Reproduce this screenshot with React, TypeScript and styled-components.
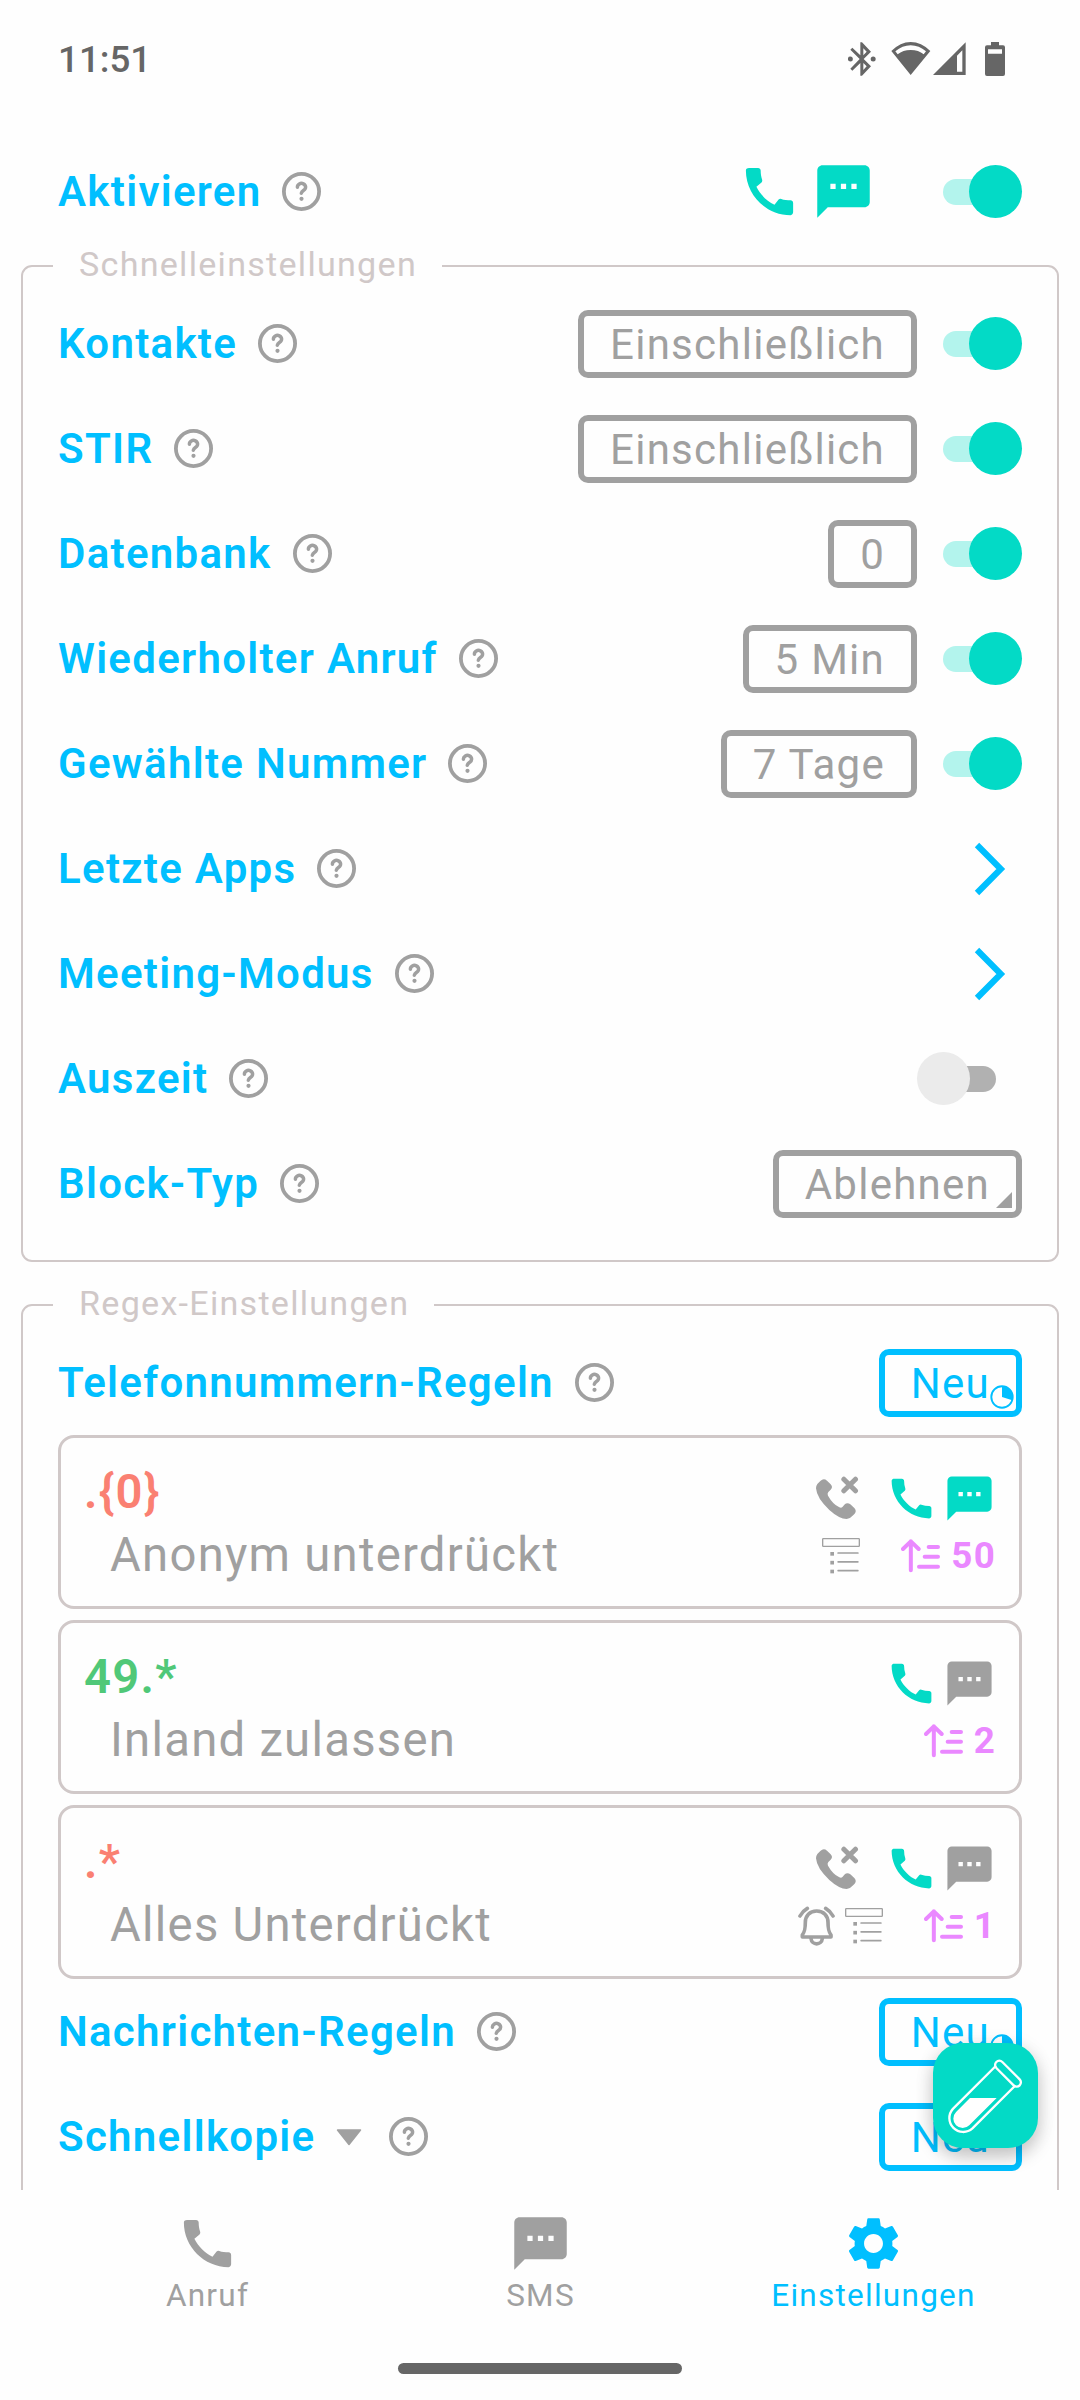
import React from "react";
import styled, { createGlobalStyle } from "styled-components";
import { MdCall, MdSettings, MdTextsms } from "react-icons/md";

const color = {
  blue: "#00bfff",
  teal: "#03dac6",
  gray: "#a0a0a0",
  line: "#d0c8c8",
  salmon: "#fa8072",
  green: "#50c878",
  violet: "#ea88ff",
  status: "#666666",
};

const GlobalStyle = createGlobalStyle`
  * { box-sizing: border-box; }
  body { margin: 0; background: #fefefe; }
`;

const Screen = styled.div`
  position: relative;
  display: flex;
  flex-direction: column;
  width: 1080px;
  height: 2400px;
  overflow: hidden;
  background: #fefefe;
  font-family: Roboto, "Noto Sans", sans-serif;
  letter-spacing: 1.26px;
  color: ${color.gray};
  svg { display: block; flex: none; }
`;

/* ---------- status bar ---------- */

const StatusBar = styled.header`
  display: flex;
  align-items: center;
  justify-content: space-between;
  height: 139px;
  padding: 0 75px 21px 58px;
  color: ${color.status};
`;

const Clock = styled.span`
  font-size: 36.75px;
  font-weight: 500;
  letter-spacing: 0;
`;

const StatusIcons = styled.div`
  display: flex;
  align-items: center;
`;

const StatusGlyph = styled.svg<{ $gap?: number }>`
  margin-left: ${(p) => p.$gap ?? 0}px;
  fill: currentColor;
`;

/* ---------- settings ---------- */

const Main = styled.main`
  flex: none;
  height: 2051px;
  overflow: hidden;
`;

const Row = styled.div<{ $outer?: boolean }>`
  display: flex;
  align-items: center;
  height: 105px;
  padding: 0 ${(p) => (p.$outer ? 58 : 35)}px;
`;

const Label = styled.span`
  margin-right: 21px;
  font-size: 42px;
  font-weight: 600;
  line-height: 50px;
  letter-spacing: 1.29px;
  white-space: nowrap;
  color: ${color.blue};
`;

const Actions = styled.div`
  display: flex;
  align-items: center;
  margin-left: auto;
`;

const ChannelIcons = styled.div<{ $gap: number; $after?: number }>`
  display: flex;
  gap: ${(p) => p.$gap}px;
  margin-right: ${(p) => p.$after ?? 0}px;
`;

const Group = styled.fieldset<{ $top: number }>`
  min-width: 0;
  margin: ${(p) => p.$top}px 21px 0;
  padding: 4px 0 24px;
  border: 2px solid ${color.line};
  border-radius: 11px;
`;

const Legend = styled.legend`
  height: 42px;
  margin-left: 30px;
  padding: 0 25px 0 26px;
  font-size: 34.125px;
  line-height: 38px;
  color: ${color.line};
`;

const OutlineButton = styled.button<{ $accent?: boolean }>`
  position: relative;
  height: 68px;
  margin-top: 1px;
  padding: 1px 26px 0;
  border: 6px solid currentColor;
  border-radius: 10px;
  background: transparent;
  font: 400 42px/54px Roboto, "Noto Sans", sans-serif;
  letter-spacing: inherit;
  white-space: nowrap;
  color: ${(p) => (p.$accent ? color.blue : color.gray)};
`;

const Corner = styled.span<{ $inset: number }>`
  position: absolute;
  right: ${(p) => p.$inset}px;
  bottom: ${(p) => p.$inset}px;
`;

const Track = styled.span<{ $on: boolean }>`
  display: flex;
  align-items: center;
  justify-content: ${(p) => (p.$on ? "flex-end" : "flex-start")};
  width: 53px;
  height: 26px;
  margin: 0 26px;
  border-radius: 13px;
  background: ${(p) => (p.$on ? "#b3f4ed" : "#b1b1b1")};
`;

const Thumb = styled.span<{ $on: boolean }>`
  flex: none;
  width: 53px;
  height: 53px;
  margin: 0 -26px;
  border-radius: 50%;
  background: ${(p) => (p.$on ? color.teal : "#ebebeb")};
`;

const ChevronBox = styled.span`
  margin-right: 15px;
`;

const DropArrow = styled.span`
  margin: 1px 27px 0 0;
`;

/* ---------- rule cards ---------- */

const Rules = styled.div`
  display: flex;
  flex-direction: column;
  gap: 11px;
  padding: 0 35px;
`;

const Card = styled.article`
  display: flex;
  justify-content: space-between;
  height: 174px;
  padding: 22px 23px 0;
  border: 3px solid ${color.line};
  border-radius: 16px;
`;

const RuleText = styled.div`
  padding-top: 1px;
  font-size: 47.25px;
  line-height: 63px;
`;

const Pattern = styled.div<{ $tone: string }>`
  font-weight: 600;
  color: ${(p) => p.$tone};
`;

const Description = styled.div`
  padding-left: 26px;
`;

const Meta = styled.div`
  display: flex;
  flex-direction: column;
  align-items: flex-end;
`;

const MetaTop = styled.div`
  display: flex;
  align-items: center;
  height: 54px;
  margin-top: 11px;
`;

const MetaBottom = styled.div`
  display: flex;
  align-items: center;
  height: 62px;
`;

const BlockedSlot = styled.span`
  margin-right: 26px;
`;

const Priority = styled.div`
  display: flex;
  align-items: center;
  gap: 11px;
  margin-left: 41px;
  font-size: 36.75px;
  font-weight: 700;
  line-height: 44px;
  color: ${color.violet};
`;

const Flags = styled.div`
  display: flex;
  align-items: center;
  gap: 10px;
`;

/* ---------- floating button and navigation ---------- */

const Fab = styled.button`
  position: absolute;
  top: 2043px;
  left: 933px;
  width: 105px;
  height: 105px;
  padding: 0;
  border: 0;
  border-radius: 30px;
  background: ${color.teal};
  box-shadow: 0 9px 18px rgba(0, 0, 0, 0.2), 0 2px 20px rgba(0, 0, 0, 0.08);
`;

const Nav = styled.nav`
  display: grid;
  grid-template-columns: repeat(3, 1fr);
  height: 173px;
  padding: 22px 40px 0 41px;
`;

const NavItem = styled.a<{ $active?: boolean }>`
  display: flex;
  flex-direction: column;
  align-items: center;
  font-size: 31.5px;
  line-height: 42px;
  color: ${(p) => (p.$active ? color.blue : color.gray)};
`;

const HomeBar = styled.div`
  width: 284px;
  height: 11px;
  margin: 0 auto;
  border-radius: 6px;
  background: ${color.status};
`;

/* ---------- drawings ---------- */

const Help = () => (
  <svg width="39" height="39" viewBox="0 0 39 39" fill="none" stroke={color.gray} strokeLinecap="round" strokeLinejoin="round">
    <circle cx="19.5" cy="19.5" r="17.6" strokeWidth="3.8" />
    <path d="M15.4 15.2 A4.1 3.7 0 1 1 21.7 18.2 Q19.6 19.6 19.3 21.3" strokeWidth="3.5" />
    <circle cx="19.5" cy="26.8" r="2.1" fill={color.gray} stroke="none" />
  </svg>
);

const Chevron = () => (
  <ChevronBox>
    <svg width="34" height="54" viewBox="0 0 34 54" fill="none" stroke={color.blue} strokeWidth="6.2">
      <path d="M4 3 L27.8 27 L4 51" />
    </svg>
  </ChevronBox>
);

const CallBlocked = () => (
  <svg width="44" height="44" viewBox="105 471 132 132" fill={color.gray}>
    <path d="M121 486 Q131 476 141 485 L152 496 Q160 505 152 512 L145 519 Q141 524 144 530 Q158 555 178 565 Q184 568 188 563 L193 557 Q202 549 211 556 L223 567 Q231 576 224 584 L216 592 Q210 600 200 600 Q178 600 148 573 Q110 537 108 508 Q108 500 112 495 Z" />
    <path d="M191.5 480.5 L226.5 515.5 M226.5 480.5 L191.5 515.5" stroke={color.gray} strokeWidth="15" strokeLinecap="round" />
  </svg>
);

const BlockList = () => (
  <svg width="38" height="36" viewBox="126 658 114 108" fill={color.gray}>
    <rect x="128" y="660" width="110" height="23" rx="2" fill="none" stroke={color.gray} strokeWidth="4" />
    {[703, 729.5, 756].map((y) => (
      <g key={y}>
        <rect x="151" y={y - 3} width="11" height="11" />
        <rect x="172" y={y - 2.5} width="64" height="5" rx="2" />
      </g>
    ))}
  </svg>
);

const Bell = () => (
  <svg width="37" height="40" viewBox="55 889 111 120" fill="none" stroke={color.gray} strokeWidth="11" strokeLinecap="round" strokeLinejoin="round">
    <path d="M111 904 C90 904 77 918 77 938 C77 960 75 966 68 976 V982 H154 V976 C147 966 145 960 145 938 C145 918 132 904 111 904 Z" />
    <path d="M94 986 C96 1008 126 1008 128 986" />
    <path d="M61 919 Q69 904 83 896 M160 919 Q152 904 138 896" />
  </svg>
);

const SortUp = () => (
  <svg width="39" height="34" viewBox="363 656 117 102" fill="none" stroke={color.violet} strokeWidth="12" strokeLinecap="round" strokeLinejoin="round">
    <path d="M392.5 663 V750 M369 686 L392.5 663 L416 686" />
    <path d="M446 680 H474 M434 709.5 H474 M417 739 H474" />
  </svg>
);

const Pie = () => (
  <svg width="24" height="24" viewBox="0 0 24 24">
    <circle cx="12" cy="12" r="10.7" fill="none" stroke="currentColor" strokeWidth="1.9" />
    <path d="M12 12 V1.3 A10.7 10.7 0 0 1 22.3 15.2 Z" fill="currentColor" />
  </svg>
);

const TestTube = () => (
  <svg width="105" height="105" viewBox="459 219 315 315" fill="none" stroke="#fff" strokeWidth="7">
    <path d="M648 287.4 L518.7 416.7 A41.5 41.5 0 0 0 577.3 475.3 L706 346.6" />
    <path d="M667 276 L719 328 A12.7 12.7 0 0 1 701 346 L649 294 A12.7 12.7 0 0 1 667 276 Z" />
    <path d="M570 384 H650 L567.8 465.8 A28 28 0 0 1 528.2 426.2 Z" fill="#fff" stroke="none" />
  </svg>
);

/* ---------- composed parts ---------- */

const Switch = ({ on }: { on: boolean }) => (
  <Track $on={on}>
    <Thumb $on={on} />
  </Track>
);

type SettingProps = {
  label: string;
  outer?: boolean;
  extra?: React.ReactNode;
  children: React.ReactNode;
};

const Setting = ({ label, outer, extra, children }: SettingProps) => (
  <Row $outer={outer}>
    <Label>{label}</Label>
    {extra}
    <Help />
    <Actions>{children}</Actions>
  </Row>
);

const NewButton = ({ pie = true }: { pie?: boolean }) => (
  <OutlineButton $accent>
    Neu
    {pie && (
      <Corner $inset={2}>
        <Pie />
      </Corner>
    )}
  </OutlineButton>
);

type Rule = {
  pattern: string;
  tone: string;
  text: string;
  sms: boolean;
  blocked: boolean;
  flags: ("bell" | "list")[];
  priority: number;
};

const rules: Rule[] = [
  { pattern: ".{0}", tone: color.salmon, text: "Anonym unterdrückt", sms: true, blocked: true, flags: ["list"], priority: 50 },
  { pattern: "49.*", tone: color.green, text: "Inland zulassen", sms: false, blocked: false, flags: [], priority: 2 },
  { pattern: ".*", tone: color.salmon, text: "Alles Unterdrückt", sms: false, blocked: true, flags: ["bell", "list"], priority: 1 },
];

const RuleCard = ({ rule }: { rule: Rule }) => (
  <Card>
    <RuleText>
      <Pattern $tone={rule.tone}>{rule.pattern}</Pattern>
      <Description>{rule.text}</Description>
    </RuleText>
    <Meta>
      <MetaTop>
        {rule.blocked && (
          <BlockedSlot>
            <CallBlocked />
          </BlockedSlot>
        )}
        <ChannelIcons $gap={5}>
          <MdCall size={53} color={color.teal} />
          <MdTextsms size={53} color={rule.sms ? color.teal : color.gray} />
        </ChannelIcons>
      </MetaTop>
      <MetaBottom>
        <Flags>{rule.flags.map((f) => (f === "bell" ? <Bell key={f} /> : <BlockList key={f} />))}</Flags>
        <Priority>
          <SortUp />
          {rule.priority}
        </Priority>
      </MetaBottom>
    </Meta>
  </Card>
);

const switched = [
  ["Kontakte", "Einschließlich"],
  ["STIR", "Einschließlich"],
  ["Datenbank", "0"],
  ["Wiederholter Anruf", "5 Min"],
  ["Gewählte Nummer", "7 Tage"],
];

export default function App() {
  return (
    <Screen>
      <GlobalStyle />
      <StatusBar>
        <Clock>11:51</Clock>
        <StatusIcons>
          <StatusGlyph width="28" height="34" viewBox="443 127 84 102">
            <path d="M480 128 h5 L512 156 L490 178 L512 200 L485 228 h-5 V190 L456 213 L450 207 L478 178 L450 150 L456 144 L480 167 Z M489 146 V167 L499 156 Z M489 190 V211 L499 200 Z" fillRule="evenodd" />
            <circle cx="450" cy="178" r="7.5" />
            <circle cx="518.5" cy="178" r="7.5" />
          </StatusGlyph>
          <StatusGlyph $gap={15} width="40" height="34" viewBox="572 126 120 102">
            <path d="M631 225 L573 153 Q600 126 631 126 Q663 126 690 153 Z M585 154 L592 163 Q608 150 631 150 Q655 150 670 163 L677 154 Q656 136 631 136 Q606 136 585 154 Z" fillRule="evenodd" />
          </StatusGlyph>
          <StatusGlyph $gap={2} width="33" height="34" viewBox="700 126 99 102">
            <path d="M798 127 V225 H700 Z M788 151 L772 167 V215 H788 Z" fillRule="evenodd" />
          </StatusGlyph>
          <StatusGlyph $gap={19} width="20" height="34" viewBox="855 126 60 102">
            <path d="M873 126 H897 V136 H909 Q915 136 915 142 V222 Q915 228 909 228 H861 Q855 228 855 222 V142 Q855 136 861 136 H873 Z M864 148 V161 H906 V148 Z" fillRule="evenodd" />
          </StatusGlyph>
        </StatusIcons>
      </StatusBar>

      <Main>
        <Setting label="Aktivieren" outer>
          <ChannelIcons $gap={11} $after={42}>
            <MdCall size={63} color={color.teal} />
            <MdTextsms size={63} color={color.teal} />
          </ChannelIcons>
          <Switch on />
        </Setting>

        <Group $top={1}>
          <Legend>Schnelleinstellungen</Legend>
          {switched.map(([label, value]) => (
            <Setting key={label} label={label}>
              <OutlineButton>{value}</OutlineButton>
              <Switch on />
            </Setting>
          ))}
          <Setting label="Letzte Apps">
            <Chevron />
          </Setting>
          <Setting label="Meeting-Modus">
            <Chevron />
          </Setting>
          <Setting label="Auszeit">
            <Switch on={false} />
          </Setting>
          <Setting label="Block-Typ">
            <OutlineButton>
              Ablehnen
              <Corner $inset={4}>
                <svg width="16" height="16" viewBox="0 0 16 16">
                  <path d="M16 0 V16 H0 Z" fill={color.gray} />
                </svg>
              </Corner>
            </OutlineButton>
          </Setting>
        </Group>

        <Group $top={22}>
          <Legend>Regex-Einstellungen</Legend>
          <Setting label="Telefonnummern-Regeln">
            <NewButton />
          </Setting>
          <Rules>
            {rules.map((rule) => (
              <RuleCard key={rule.pattern} rule={rule} />
            ))}
          </Rules>
          <Setting label="Nachrichten-Regeln">
            <NewButton />
          </Setting>
          <Setting
            label="Schnellkopie"
            extra={
              <DropArrow>
                <svg width="26" height="17" viewBox="0 0 26 17">
                  <path d="M1.5 1 H24.5 L13 15.5 Z" fill={color.gray} stroke={color.gray} strokeWidth="1.5" strokeLinejoin="round" />
                </svg>
              </DropArrow>
            }
          >
            <NewButton pie={false} />
          </Setting>
        </Group>
      </Main>

      <Nav>
        <NavItem>
          <MdCall size={63} />
          Anruf
        </NavItem>
        <NavItem>
          <MdTextsms size={63} />
          SMS
        </NavItem>
        <NavItem $active>
          <MdSettings size={63} />
          Einstellungen
        </NavItem>
      </Nav>
      <HomeBar />

      <Fab aria-label="Test">
        <TestTube />
      </Fab>
    </Screen>
  );
}
